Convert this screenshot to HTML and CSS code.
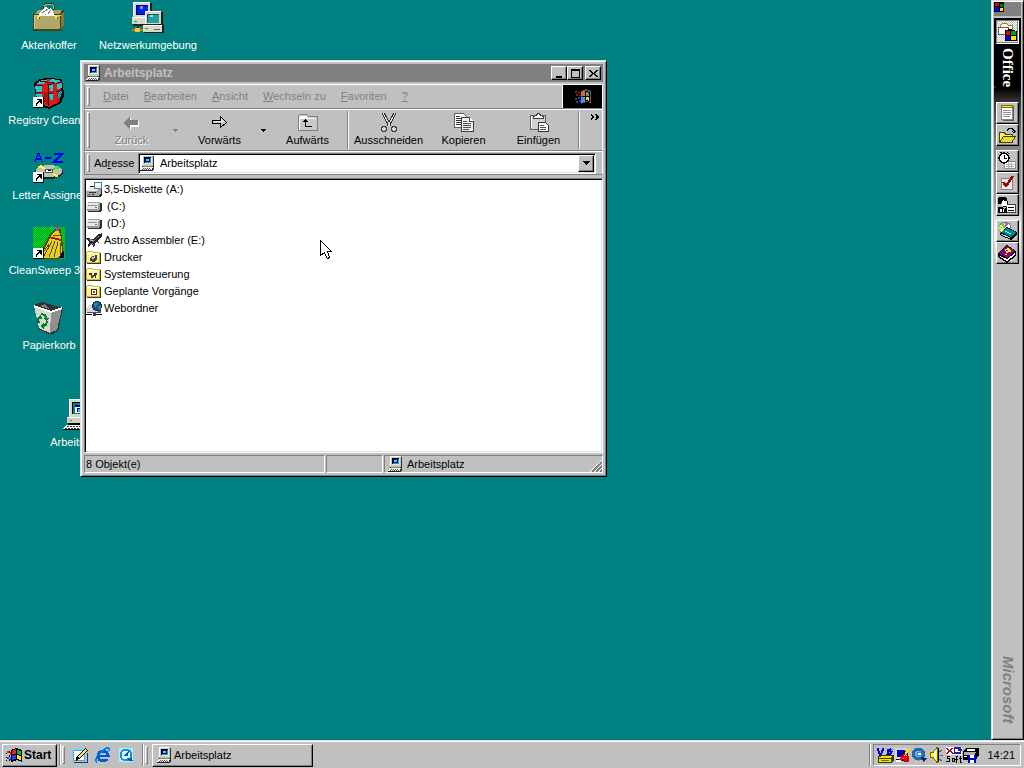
FILE: index.html
```html
<!DOCTYPE html>
<html lang="de">
<head>
<meta charset="utf-8">
<title>Arbeitsplatz</title>
<link rel="stylesheet" href="styles.css">
</head>
<body>
<svg class="sprite" aria-hidden="true">
  <defs>
    <pattern id="dither" width="2" height="2" patternUnits="userSpaceOnUse"><path fill="#000" fill-opacity=".45" d="M0 0h1v1H0zM1 1h1v1H1z"/></pattern>
    <pattern id="greens" width="2" height="2" patternUnits="userSpaceOnUse"><path fill="#00a020" d="M0 0h2v2H0z"/><path fill="#00e020" d="M0 0h1v1H0zM1 1h1v1H1z"/></pattern>
  </defs>
  <symbol id="pc" viewBox="0 0 16 16">
    <path fill="#303030" d="M3 1h11v14h-1l-1 1H2v-5h1z"/><path fill="#c8c8b8" d="M2 0h11v11H2z"/><path fill="#fff" d="M2 0h10v1H3v9H2z"/><path fill="#000" d="M4 2h7v1H5v5H4z"/><path fill="#30a0a0" d="M5 3h6v5H5z"/><path fill="#0000b0" d="M5 3h5v4H5z"/><path fill="#40e0d0" d="M6 4h3v2H6z"/><path fill="#e8e8d8" d="M4 8h8v1H4zM11 2h1v7h-1z"/><path fill="#808078" d="M3 11h9v1H3z"/>
    <path fill="#f4f4e8" d="M2 12h11v1H2zM1 13h11v1H1zM0 14h12v1H0z"/><path fill="#505050" d="M3 13h1v1H3zM5 13h1v1H5zM7 13h1v1H7zM9 13h1v1H9zM2 14h1v1H2zM4 14h1v1H4zM6 14h1v1H6zM8 14h1v1H8zM10 14h1v1h-1z"/><path fill="#202020" d="M0 15h12v1H0z"/>
  </symbol>
  <symbol id="pc-large" viewBox="0 0 32 32">
    <path fill="#000" d="M7 1h20v19H7z"/><path fill="#d8d8c8" d="M6 0h20v18H6z"/><path fill="#fff" d="M6 0h19v1H7v16H6z"/><path fill="#000" d="M9 3h15v12H9z"/><path fill="#008080" d="M10 4h14v11H10z"/><path fill="#fff" d="M12 6h11v8H12z"/><path fill="#0000a0" d="M12 6h11v2H12zM14 9h9v4h-9z"/><path fill="#20d0d0" d="M15 10h8v3h-8z"/>
    <path fill="#000" d="M5 18h22v8H5z"/><path fill="#d0d0c0" d="M4 18h22v6H4z"/><path fill="#fff" d="M4 18h21v1H4z"/><path fill="#00b020" d="M7 21h2v1H7z"/><path fill="#606060" d="M17 21h7v1h-7z"/><path fill="#f0f0e0" d="M3 26h22l-2 4H0z"/><path stroke="#404040" stroke-dasharray="2 1" d="M4 27.500h19M2 29.500h20"/><path fill="#000" d="M0 30h24v1H0z"/>
  </symbol>
  <symbol id="flag" viewBox="0 0 16 14">
    <path fill="#000" d="M5 2l5-2 6 2v12l-5-2-6 2z"/><path fill="#f02020" d="M6 3l4-2v5H6z"/><path fill="#00c020" d="M11 2l4 1v4l-4-1z"/><path fill="#2040ff" d="M6 7h4v4l-4 1z"/><path fill="#ffe020" d="M11 7l4 1v4l-4-1z"/><path fill="#000" d="M3 3h1v2H3zM3 7h1v2H3zM3 11h1v2H3zM0 5h1v1H0zM0 9h1v1H0zM0 12h1v1H0z"/><path fill="#f02020" d="M1 3h2v2H1zM4 4h1v3H4z"/><path fill="#2040ff" d="M1 9h2v2H1zM4 9h1v3H4z"/>
  </symbol>
  <symbol id="flag-dark" viewBox="0 0 18 16">
    <path fill="#605858" d="M7 2l5-2 5 2v12l-5-1-5 2z"/><path fill="#000" d="M8 3l4-1 4 1v10l-4-1-4 1z"/><path fill="#e06040" d="M7 3l4-1v5H7z"/><path fill="#50a070" d="M12 3l3 1v3h-3z"/><path fill="#5090e0" d="M7 8h4v5l-4 1z"/><path fill="#f0c840" d="M12 8h3v4l-3-1z"/><path fill="#802018" d="M1 2h2v2H1zM4 3h2v2H4zM2 5h2v2H2zM5 6h2v1H5z"/><path fill="#204890" d="M1 9h2v2H1zM4 8h2v2H4zM2 12h2v2H2zM5 11h2v2H5z"/>
  </symbol>
  <symbol id="shortcut" viewBox="0 0 11 11"><path fill="#000" d="M0 0h11v11H0z"/><path fill="#fff" d="M0 0h10v10H0z"/><path fill="#000" d="M4 2h5v5H8V6H7V5H6v1H5v1H4v2H3V6h1V5h1V4h1V3H4z"/></symbol>
  <symbol id="briefcase" viewBox="0 0 32 32">
    <path fill="#303010" d="M10 5l2-4h8l2 4v3h-2V4l-1-1h-6l-1 1v4h-2z"/><path fill="#b8b070" d="M11 4l1-2h8l1 2v3h-1V4l-1-1h-6l-1 1v2h-1z"/>
    <path fill="#404018" d="M3 10l3-2h25v15l-3 6H0V12z"/><path fill="#a8a060" d="M3 10l3-2h23l-2 4H2z"/><path fill="#807838" d="M28 12l3-3v14l-3 5z"/><path fill="#b0a868" d="M1 14h26v13H1z"/><path fill="#d8d090" d="M1 13h27v1H2v13H1z"/><path fill="#fff" d="M6 12l7-8 2 3 3-1 4 8H6z"/><path stroke="#808080" d="M9 11l6-4M15 12l3-4M12 13l1-1"/><path fill="#ffe060" d="M4 14h3v3H4zM22 14h3v3h-3z"/><path fill="#504808" d="M6 15h1v2H6zM24 15h1v2h-1zM1 27h26v1H1z"/>
  </symbol>
  <symbol id="network" viewBox="0 0 32 32">
    <path fill="#202020" d="M1 1h19v23H1z"/><path fill="#d8d8c8" d="M1 0h17v15H1zM0 15h18v7H0z"/><path fill="#fff" d="M1 0h17v1H2v13H1zM0 15h18v1H0z"/><path fill="#000080" d="M4 3h12v10H4z"/><path fill="#0020e0" d="M5 4h11v8H5z"/><path fill="#60a0ff" d="M8 4h3v3H8z"/><path fill="#00c000" d="M2 19h3v1H2z"/><path fill="#303030" d="M5 22h2v8H5z"/><path fill="#c08010" d="M0 27h13v2H0z"/><path fill="#ffc040" d="M3 26h5v4H3z"/>
    <path fill="#202020" d="M14 10h17v12h1v9H12v-9h2z"/><path fill="#d8d8c8" d="M13 9h16v13H13zM11 23h19v7H11z"/><path fill="#fff" d="M13 9h16v1H14v12h-1zM11 23h19v1H11z"/><path fill="#205050" d="M15 12h12v9H15z"/><path fill="#20a0a0" d="M16 13h11v8H16z"/><path fill="#80f0e0" d="M18 13h3v2h-3z"/><path fill="#00c000" d="M13 26h3v1h-3z"/><path fill="#606060" d="M22 27h6v1h-6z"/>
  </symbol>
  <symbol id="registry" viewBox="0 0 32 32">
    <path fill="#000" d="M1 6l6-4 8-1 13 1 2 5 1 12-3 7-12 6-9-3-4-8z"/><path fill="#e01818" d="M3 7l6-4 8-1 10 1 2 3-2 19-11 5-8-3-5-11z"/><path fill="#20c8d0" d="M4 6l5-3h5l-4 4H3zM18 2l7 1 3 2-7 1-5-1zM2 9h7v6H3zM16 8l6-1v6l-5 1zM24 7l5-1v5l-5 1zM16 17l7-1v6l-6 1zM25 15l4-1-1 6-3 2zM3 17h6v6H5z"/><path stroke="#600000" fill="none" d="M2 8h12l15-3M15 8l1 21M3 15l13 2 13-4M7 4l14 2"/><path fill="#e01818" d="M10 8h5v20l-4-2zM20 7l3-1v19l-3 2z"/><path fill="url(#dither)" d="M11 15h5v13l-5-4zM24 14h5l-2 11-3 2z"/><use href="#shortcut" x="0" y="20" width="11" height="11"/>
  </symbol>
  <symbol id="letters" viewBox="0 0 32 32">
    <path fill="none" stroke="#0000f0" stroke-width="1.500" d="M2 10l3-8h1l3 8M3 7h5M12 6h6M21 2h8l-8 8h9"/><ellipse cx="16" cy="20" rx="14" ry="7" fill="#202020"/><ellipse cx="16" cy="19" rx="13" ry="6" fill="#c0c0b8"/><path fill="#ffff20" d="M16 19L4 15l4-2zM16 19l10 5-3 1z"/><path fill="#20f020" d="M16 19l9-5 3 2zM16 19l-7 5-3-1z"/><ellipse cx="16" cy="19" rx="4" ry="2" fill="#fff" stroke="#505050"/><path fill="#000" d="M15 18h3v1h-3z"/><use href="#shortcut" x="0" y="20" width="11" height="11"/>
  </symbol>
  <symbol id="sweep" viewBox="0 0 32 32">
    <path fill="url(#greens)" d="M0 0h32v32H0z"/><path fill="#604000" d="M23 1h4l2 9 2 18-6 4H5l4-9 7-14z"/><path fill="#e0d020" d="M22 4h4l2 6 1 18-5 3H7l5-10 6-12z"/><path fill="#c040a0" d="M23 0h3v4h-3z"/><path stroke="#a02020" stroke-width="2" d="M16 10l12 3"/><path stroke="#704010" d="M20 8l7 1M19 14l-8 15M22 14l-6 16M25 15l-4 15M27 16v13M16 17l-7 10"/><path fill="#000040" d="M29 25h2v6h-4z"/><use href="#shortcut" x="0" y="21" width="11" height="11"/>
  </symbol>
  <symbol id="bin" viewBox="0 0 32 32">
    <path fill="#303030" d="M1 3l8-3 21 6-5 23-7 4-12-6z"/><path fill="#d8d8d0" d="M1 4l17 6-1 21-11-5z"/><path fill="#909090" d="M18 10l11-4-5 22-7 3z"/><path fill="#303030" d="M3 4l6-3 18 5-9 3z"/><path fill="#888" d="M7 4l5-2 4 5z"/><path fill="#fff" d="M1 3l17 6 11-4v2l-11 4L1 5z"/><path fill="none" stroke="#008020" stroke-width="2" d="M8 12l4 1 1 3M14 19l-1 4-3 1M6 21l-1-4 2-2"/><path fill="#008020" d="M11 16h5l-3 3zM11 21v6l-4-3zM4 16l4-3 1 4z"/>
  </symbol>
  <symbol id="min" viewBox="0 0 9 9"><path d="M1 7h6v2H1z"/></symbol>
  <symbol id="max" viewBox="0 0 9 9"><path fill-rule="evenodd" d="M0 0h9v9H0zM1 2v6h7V2z"/></symbol>
  <symbol id="close" viewBox="0 0 9 9"><path d="M0 1h2v1h1v1h1v1h1V3h1V2h1V1h2v1H8v1H7v1H6v1h1v1h1v1h1v1H7V7H6V6H5V5H4v1H3v1H2v1H0V7h1V6h1V5h1V4H2V3H1V2H0z"/></symbol>
  <symbol id="down" viewBox="0 0 7 4"><path d="M0 0h7v1H6v1H5v1H4v1H3V3H2V2H1V1H0z"/></symbol>
  <symbol id="down-small" viewBox="0 0 5 3"><path d="M0 0h5v1H4v1H3v1H2V2H1V1H0z"/></symbol>
  <symbol id="back" viewBox="0 0 20 20"><path fill="#fff" d="M2 11l7-6v3h8v6H9v3z"/><path fill="#808080" d="M1 10l7-6v3h8v5H8v4z"/></symbol>
  <symbol id="forward" viewBox="0 0 20 20"><path fill="#c8c8c8" stroke="#000" d="M2.500 7.500h8v-4l6 6-6 5v-4h-8z"/><path fill="#e8e8e8" d="M3 8h8V6l3 3H3z"/></symbol>
  <symbol id="up" viewBox="0 0 20 20"><path fill="#000" d="M19 4h1v14H1v-1h18z"/><path fill="#c8c8c8" stroke="#808080" d="M.5 17V3.500l2-2h6l2 2h9V17z"/><path fill="#fff" d="M2 3h7l1 2h8v1H2zM1 4h1v13H1z"/><path fill="#000" d="M7 6h1v1h1v1h1v1H8v4h6v1H7V9H5V8h1V7h1z"/></symbol>
  <symbol id="cut" viewBox="0 0 20 20"><path fill="none" stroke="#303030" stroke-width="3" d="M4 0l7 13M16 0L9 13"/><path fill="none" stroke="#e0e0e0" d="M4 0l7 13M16 0L9 13"/><circle cx="5" cy="16" r="2.500" fill="#d8d8d8" stroke="#404040" stroke-width="1.500"/><circle cx="15" cy="16" r="2.500" fill="#d8d8d8" stroke="#404040" stroke-width="1.500"/></symbol>
  <symbol id="copy" viewBox="0 0 20 20"><path fill="#fff" stroke="#606060" d="M.5.500h9l3 3v11H.5z"/><path stroke="#303030" d="M2 3.500h4M2 5.500h5M2 7.500h5M2 9.500h5M2 11.500h5"/><path fill="#eee" stroke="#404040" d="M7.500 4.500h8l4 4v10h-12z"/><path fill="#fff" stroke="#404040" d="M15.500 4.500v4h4"/><path stroke="#505050" d="M9 8.500h4M9 10.500h8M9 12.500h8M9 14.500h8M9 16.500h6"/></symbol>
  <symbol id="paste" viewBox="0 0 20 20"><path fill="#d0d0d0" stroke="#606060" d="M1.500 2.500h15v14h-15z"/><path fill="#fff" stroke="#404040" d="M4.500 5.500v-2l3-1 1-2h2l1 2 3 1v2z"/><path fill="#fff" d="M2 3h1v12H2z"/><path fill="#fff" stroke="#303030" d="M9.500 9.500h7l3 3v6h-10z"/><path stroke="#505050" d="M11 12.500h4M11 14.500h6M11 16.500h6"/></symbol>
  <symbol id="floppy" viewBox="0 0 16 16"><path fill="#202020" d="M1 7l3-3h12v9l-2 2H1z"/><path fill="#a8a8a8" d="M0 8l4-3h11v6l-3 3H0z"/><path fill="#e8e8e8" d="M0 8l4-3h10l-3 4H0z"/><path fill="#d8f8ff" stroke="#508090" d="M8.500.500h7v6h-7z"/><path fill="#fff" d="M10 1h4v2h-4z"/><path fill="#303030" d="M3 10h7v1H3zM6 12h2v1H6z"/><path fill="#00b000" d="M2 12h2v1H2z"/></symbol>
  <symbol id="drive" viewBox="0 0 16 16"><path fill="#303030" d="M2 4h13l1 1v7l-2 1H2z"/><path fill="#a0a0a0" d="M0 5l2-2h12v8l-2 1H1l-1-1z"/><path fill="#e8e8e8" d="M0 5l2-1h11l-1 1v6H0z"/><path fill="#909090" d="M2 6h9v1H2zM1 10h11v1H1z"/><path fill="#00c000" d="M9 8h2v1H9z"/></symbol>
  <symbol id="ship" viewBox="0 0 16 16"><path fill="#202028" d="M16 0v3l-4 4 1 3-3-1-2 6-2-4-4 3 1-5-3-4 7 1 4-4z"/><path fill="#707080" d="M14 1l-4 6-3 2-5-3 7 1zM7 9l1 4-2-2z"/><path fill="#b0b0c0" d="M12 3h1v1h-1zM4 7h3v1H4z"/><path fill="#a02030" d="M4 10h1v2H4z"/></symbol>
  <symbol id="folder" viewBox="0 0 16 16"><path fill="#403800" d="M1 3h14v11H1z"/><path fill="#c8b840" d="M0 2l1-1h5l1 1h7v11H0z"/><path fill="#fff090" d="M1 2h5l1 1h6v9H1z"/><path fill="#fff" d="M1 3h12v1H1z"/></symbol>
  <symbol id="printers" viewBox="0 0 16 16"><use href="#folder"/><path fill="#404040" d="M4 8l3-2 4-1v4l-3 3-4-1z"/><path fill="#d0d0d0" d="M5 8l4-2v2L7 9z"/><path fill="#00a000" d="M7 9h1v1H7z"/></symbol>
  <symbol id="control" viewBox="0 0 16 16"><use href="#folder"/><path fill="#303030" d="M3 6h3v2h2V6h3v2h-1v3H9V8L6 11H5V8H3z"/><path fill="#c02020" d="M5 8h2v2H5z"/><path fill="#2020c0" d="M9 6h2v2H9z"/></symbol>
  <symbol id="tasks" viewBox="0 0 16 16"><use href="#folder"/><path fill="#303030" d="M5 5h6v6H5z"/><path fill="#fff" d="M6 6h4v4H6z"/><path fill="#e02020" d="M7 7h2v2H7z"/></symbol>
  <symbol id="web" viewBox="0 0 16 16"><path fill="#505050" d="M1 6h14v6H1zM8 12h1v2H8z"/><path fill="#d8d8d8" d="M0 7l3-3h9v7H0z"/><path fill="#000" d="M0 13h16v1H0z"/><path fill="#fff" d="M6 12h4v3H6z"/><path fill="#404040" d="M7 12h3v3H7z"/><circle cx="11" cy="5" r="5" fill="#002060"/><circle cx="11" cy="5" r="4" fill="#2040d0"/><path fill="#20a030" d="M8 2l3-1 1 2-2 3-2-1zM12 5l3-1v3l-2 2z"/></symbol>
</svg>

<div class="workspace">
  <main class="desktop">
    <div class="icon-grid">
      <a class="shortcut first-column" href="#aktenkoffer"><svg><use href="#briefcase"/></svg><span>Aktenkoffer</span></a>
      <a class="shortcut" href="#netzwerk"><svg><use href="#network"/></svg><span>Netzwerkumgebung</span></a>
      <a class="shortcut first-column" href="#registry-clean"><svg><use href="#registry"/></svg><span>Registry Clean...</span></a>
      <a class="shortcut first-column" href="#letter"><svg><use href="#letters"/></svg><span>Letter Assigner</span></a>
      <a class="shortcut first-column" href="#cleansweep"><svg><use href="#sweep"/></svg><span>CleanSweep 3.0</span></a>
      <a class="shortcut first-column" href="#papierkorb"><svg><use href="#bin"/></svg><span>Papierkorb</span></a>
    </div>
    <a class="shortcut my-computer" href="#arbeitsplatz"><svg><use href="#pc-large"/></svg><span>Arbeitsplatz</span></a>

    <section class="window" id="arbeitsplatz">
      <header class="title-bar">
        <svg class="small-icon"><use href="#pc"/></svg>
        <h1>Arbeitsplatz</h1>
        <div class="window-controls">
          <button aria-label="Minimieren"><svg><use href="#min"/></svg></button><button aria-label="Maximieren"><svg><use href="#max"/></svg></button><button class="close" aria-label="Schließen"><svg><use href="#close"/></svg></button>
        </div>
      </header>
      <div class="band menu-band">
        <i class="grip"></i>
        <nav class="menu">
          <button><u>D</u>atei</button><button><u>B</u>earbeiten</button><button><u>A</u>nsicht</button><button><u>W</u>echseln zu</button><button><u>F</u>avoriten</button><button><u>?</u></button>
        </nav>
        <div class="throbber"><svg><use href="#flag-dark"/></svg></div>
      </div>
      <div class="band toolbar">
        <i class="grip"></i>
        <button class="tool disabled"><svg><use href="#back"/></svg>Zurück</button>
        <button class="more disabled" aria-label="Verlauf zurück"><svg><use href="#down-small"/></svg></button>
        <button class="tool"><svg><use href="#forward"/></svg>Vorwärts</button>
        <button class="more" aria-label="Verlauf vorwärts"><svg><use href="#down-small"/></svg></button>
        <button class="tool"><svg><use href="#up"/></svg>Aufwärts</button>
        <i class="rule"></i>
        <button class="tool"><svg><use href="#cut"/></svg>Ausschneiden</button>
        <button class="tool"><svg><use href="#copy"/></svg>Kopieren</button>
        <button class="tool"><svg><use href="#paste"/></svg>Einfügen</button>
        <i class="rule"></i>
        <button class="overflow" aria-label="Weitere Schaltflächen"><svg viewBox="0 0 8 5"><path fill="none" stroke="#000" stroke-width="1.500" d="M1 0l2 2.500L1 5M5 0l2 2.500L5 5"/></svg></button>
      </div>
      <div class="band address-band">
        <i class="grip"></i>
        <label for="address">Ad<u>r</u>esse</label>
        <div class="combo">
          <svg class="small-icon"><use href="#pc"/></svg>
          <input id="address" type="text" value="Arbeitsplatz">
          <button aria-label="Adressliste"><svg><use href="#down"/></svg></button>
        </div>
      </div>
      <ul class="files">
        <li><svg class="small-icon"><use href="#floppy"/></svg>3,5-Diskette (A:)</li>
        <li><svg class="small-icon"><use href="#drive"/></svg>&nbsp;(C:)</li>
        <li><svg class="small-icon"><use href="#drive"/></svg>&nbsp;(D:)</li>
        <li><svg class="small-icon"><use href="#ship"/></svg>Astro Assembler (E:)</li>
        <li><svg class="small-icon"><use href="#printers"/></svg>Drucker</li>
        <li><svg class="small-icon"><use href="#control"/></svg>Systemsteuerung</li>
        <li><svg class="small-icon"><use href="#tasks"/></svg>Geplante Vorgänge</li>
        <li><svg class="small-icon"><use href="#web"/></svg>Webordner</li>
      </ul>
      <footer class="status">
        <div>8 Objekt(e)</div><div></div>
        <div class="zone"><svg class="small-icon"><use href="#pc"/></svg>Arbeitsplatz
          <svg class="resize" viewBox="0 0 12 12"><path stroke="#fff" d="M0 12L12 0M4 12l8-8M8 12l4-4"/><path stroke="#808080" stroke-width="1.500" d="M2 12L12 2M6 12l6-6M10 12l2-2"/></svg></div>
      </footer>
    </section>
    <svg class="pointer" viewBox="0 0 12 19"><path fill="#fff" stroke="#000" d="M.5.500v15l4-3 2 5 1 1 2-1-2-6h4z"/></svg>
  </main>

  <aside class="office-bar">
    <div class="office-title"><svg viewBox="0 0 10 10"><path d="M0 0h10v10H0z"/><path fill="#f00000" d="M1 1h4v3H1z"/><path fill="#008000" d="M6 2h3v3H6z"/><path fill="#0000ff" d="M1 5h4v4H1z"/><path fill="#ffe000" d="M6 6h3v3H6z"/></svg></div>
    <div class="office-body">
      <button class="pressed" aria-label="Office"><svg viewBox="0 0 20 20"><path fill="#fff8c0" stroke="#808060" d="M3.500 12V3.500l2-2h4l2 2h4v8"/><path fill="#fff" stroke="#606060" d="M1.500 5.500h10v7h-10z"/><path fill="#000" d="M8 8l5-1 7 2v10H8z"/><path fill="#f00000" d="M9 9h4v4H9z"/><path fill="#00a000" d="M14 9h5v4h-5z"/><path fill="#0000ff" d="M9 14h4v4H9z"/><path fill="#ffe000" d="M14 14h5v4h-5z"/></svg></button>
      <span class="office-name">Office</span>
      <div class="office-group">
        <button aria-label="Neues Dokument"><svg viewBox="0 0 20 20"><path fill="#606060" d="M6 3h11v15H6z"/><path fill="#fff" stroke="#808080" d="M4.500 2.500h11v14h-11z"/><path fill="#ffe840" stroke="#807000" d="M4.500 2.500h11v2h-11z"/><path stroke="#909090" d="M6 7.500h8M6 9.500h8M6 11.500h8M6 13.500h7"/></svg></button>
        <button aria-label="Dokument öffnen"><svg viewBox="0 0 20 20"><path fill="#fff060" stroke="#404000" d="M2.500 17V7.500h5l1 2h7V17z"/><path fill="#e8d830" stroke="#404000" d="M2.500 17.500l4-6h12l-4 6z"/><path fill="none" stroke="#000" d="M10 5.500l2-2h3l2 2v2M15 6l2 2 2-2"/></svg></button>
      </div>
      <div class="office-group">
        <button aria-label="Neuer Termin"><svg viewBox="0 0 20 20"><path fill="#fff" stroke="#909090" d="M7.500 10.500h11v7h-11z"/><path stroke="#b0b0b0" d="M9 13.500h8M9 15.500h8M11.500 11v6M14.500 11v6"/><circle cx="7" cy="7" r="5" fill="#fff" stroke="#000" stroke-width="1.500"/><path fill="none" stroke="#000" d="M7 4v3l3 1M3 2l2-1M10 1l2 2"/></svg></button>
        <button aria-label="Neue Aufgabe"><svg viewBox="0 0 20 20"><path fill="#eee" stroke="#808080" d="M4.500 5.500h11v11h-11z"/><path fill="none" stroke="#a00000" stroke-width="2.500" d="M6 9l3 4 7-10"/></svg></button>
        <button aria-label="Neuer Kontakt"><svg viewBox="0 0 20 20"><path fill="#fff" stroke="#404040" d="M9.500 9.500h9v8h-9z"/><path stroke="#000" d="M11 12.500h6M11 15.500h6"/><path fill="#fff" d="M4 4h6v6l-2 2-3-1z"/><path fill="#000" d="M2 2h6l2 2v2H8L6 5 4 9H1V4zM10 6h1v3h-1zM6 11h3v1H6zM1 12h4l2 2 3-2v6H1z"/><path fill="#fff" d="M3 14h2v3H3zM6 14h1v3H6z"/></svg></button>
      </div>
      <div class="office-group">
        <button aria-label="Internet"><svg viewBox="0 0 20 20"><circle cx="8" cy="7" r="6" fill="#fff" stroke="#808080"/><path fill="#40e040" d="M8 7L3 3l4-2z"/><path fill="#e040e0" d="M8 7V1l4 1z"/><path fill="#e0e020" d="M8 7L2 5v4z"/><path fill="#000" d="M3 12l7-6 10 5v2l-6 6-11-5z"/><path fill="#008888" d="M4 11l6-4 9 4-5 5z"/><path stroke="#80ffff" d="M8 10l6 3M4 13l9 4"/></svg></button>
        <button aria-label="Nachschlagewerk"><svg viewBox="0 0 20 20"><path fill="#000" d="M1 10l9-8 9 6v5l-9 7-9-6z"/><path fill="#900090" d="M2 10l8-7 8 5-8 7z"/><path fill="#fff" d="M10 16l8-6v2l-8 6-7-4v-1z"/><path fill="none" stroke="#ffff00" stroke-width="1.500" d="M8 7l3-1 2 2-3 1v1M9 11v1"/></svg></button>
      </div>
      <span class="microsoft">Microsoft</span>
    </div>
  </aside>
</div>

<footer class="taskbar">
  <button class="start"><svg><use href="#flag"/></svg>Start</button>
  <i class="divider"></i><i class="grip"></i>
  <div class="quick-launch">
    <button aria-label="Desktop anzeigen"><svg viewBox="0 0 16 16"><path fill="#80d8f0" d="M0 1h13v12H0z"/><path fill="#fff" stroke="#60a0c0" d="M1.500 3.500h11v10h-11z"/><path fill="#000" d="M4 11l9-10 3 2-9 9-3 2z"/><path fill="#ffe060" d="M6 10l7-8 2 1-8 8z"/><path fill="#004080" d="M2 15h14v1H2zM15 6h1v9h-1z"/></svg></button>
    <button aria-label="Internet Explorer"><svg viewBox="0 0 16 16"><circle cx="8" cy="9" r="5" fill="none" stroke="#0058d0" stroke-width="3"/><path fill="#c0c0c0" d="M9 10h7v2h-5z"/><path fill="#0058d0" d="M4 8h11v2H4z"/><path fill="none" stroke="#0080e8" stroke-width="1.500" d="M2 15c-4-2 3-10 8-13 3-2 6-1 4 2"/></svg></button>
    <button aria-label="QuickTime"><svg viewBox="0 0 16 16"><path fill="#b8e8ff" d="M1 1h14v14H1z"/><circle cx="8" cy="8" r="5.500" fill="#d8f8ff" stroke="#2090d0" stroke-width="2"/><path fill="#0060a0" d="M5 9l6-5-1 5zM9 11h5l1 3h-4z"/></svg></button>
  </div>
  <i class="divider"></i><i class="grip"></i>
  <button class="task"><svg class="small-icon"><use href="#pc"/></svg>Arbeitsplatz</button>
  <i class="divider tray-divider"></i>
  <div class="tray">
    <svg viewBox="0 0 16 16"><path fill="none" stroke="#0000e0" stroke-width="2" d="M0 1l3 8 3-8M14 2l-3 1 3 2-2 3-3-1M10 4v6"/><path fill="#304000" d="M0 10l3-2h13v6l-2 2H0z"/><path fill="#ffe000" d="M1 11l3-2h11l-2 2zM1 12h12v3H1z"/><path fill="#806000" d="M3 13h8v1H3z"/></svg>
    <svg viewBox="0 0 16 16"><path fill="#000" d="M1 2h12v12H1z"/><path fill="#d8d8d8" d="M0 1h12v11H0z"/><path fill="#0000c0" d="M2 3h8v7H2z"/><path fill="#e00000" d="M4 13l9-11 2 2-9 11zM9 9h5v6H9z"/><path fill="#ffe000" d="M12 3l3-2v3l-6 6z"/><path fill="#fff" d="M1 13h5v2H1z"/></svg>
    <svg viewBox="0 0 16 16"><circle cx="7" cy="7" r="5" fill="#70b0e8" stroke="#2868a8" stroke-width="3"/><circle cx="8" cy="7" r="2" fill="#fff" stroke="#4080d0"/><path fill="#003060" d="M9 10l7 1-4 4z"/></svg>
    <svg viewBox="0 0 16 16"><path fill="#ffff00" stroke="#806000" d="M1.500 5.500h3l4-5v15l-4-5h-3z"/><path fill="#fff" d="M5 5l2-2v9l-2-2z"/><path fill="#000" d="M9 1h1v14H9z"/><path stroke="#606060" d="M11 8.500h3M11 5l2-2M11 12l2 2"/></svg>
    <svg viewBox="0 0 16 16"><path fill="#fff" d="M0 0h16v8H0z"/><path fill="none" stroke="#a01020" stroke-width="1.500" d="M1 1l7 6M7 1L1 7"/><path fill="none" stroke="#2020a0" stroke-width="1.500" d="M9 1h6v5H9zM12 3h4"/><path fill="none" stroke="#000" d="M4 9.500H1.500v2h2v3H0M6.500 11.500h2v3h-2zM12 9.500h-1.500V16M9 12.500h3M14.500 9v6h2M13 11.500h3"/></svg>
    <svg viewBox="0 0 16 16"><path fill="#000" d="M0 5l4-4h12v8l-3 4H0z"/><path fill="#b0b0b0" d="M2 5h12l-2 3H1z"/><path fill="#fff" d="M5 2h8l-1 2H4zM1 9h3v1H1z"/><path fill="#0000c0" d="M5 8h8v8H5z"/><path fill="#fff" d="M7 8h4v3H7zM7 13h4v3H7z"/></svg>
    <time>14:21</time>
  </div>
</footer>
</body>
</html>
```
FILE: styles.css
```css
* { box-sizing: border-box; }

body {
  margin: 0;
  height: 100vh;
  display: flex;
  flex-direction: column;
  overflow: hidden;
  background: #008080;
  color: #000;
  font: 11px/13px "Liberation Sans", Arial, sans-serif;
  cursor: default;
}

button, input { font: inherit; color: inherit; }
button { padding: 0; border: 0; background: none; }
svg { display: block; flex: none; shape-rendering: crispEdges; }
u { text-underline-offset: 1px; }

.sprite { position: absolute; width: 0; height: 0; }
.small-icon { width: 16px; height: 16px; }
.workspace { flex: 1; min-height: 0; display: flex; }
.desktop { position: relative; flex: 1; min-width: 0; }

/* Desktop shortcuts */
.icon-grid {
  display: grid;
  grid-template-columns: 75px 75px;
  grid-auto-rows: 75px;
  column-gap: 24px;
  padding: 2px 12px;
}
.first-column { grid-column: 1; }
.shortcut {
  display: flex;
  flex-direction: column;
  align-items: center;
  gap: 5px;
  width: 74px;
  color: #fff;
  text-decoration: none;
  white-space: nowrap;
}
.shortcut svg { width: 32px; height: 32px; }
.my-computer { position: absolute; left: 42px; top: 399px; }

/* Explorer window */
.window, .office-bar {
  background: #c0c0c0;
  border: 1px solid;
  border-color: #dfdfdf #000 #000 #dfdfdf;
  box-shadow: inset 1px 1px #fff, inset -1px -1px #808080;
}
.window {
  position: absolute;
  left: 80px;
  top: 60px;
  width: 527px;
  height: 417px;
  display: flex;
  flex-direction: column;
  padding: 3px;
}

.title-bar {
  display: flex;
  align-items: center;
  gap: 2px;
  height: 18px;
  margin-bottom: 2px;
  padding: 0 2px;
  background: #808080;
  color: #c0c0c0;
}
.title-bar h1 { flex: 1; margin: 0; font-size: 12px; line-height: 16px; }
.window-controls { display: flex; color: #000; }
.window-controls button { width: 16px; height: 14px; }
.window-controls svg { width: 9px; height: 9px; margin: 0 auto; }
.window-controls .close { margin-left: 2px; }

.window-controls button, .combo button, .start, .task {
  background: #c0c0c0;
  border: 1px solid;
  border-color: #fff #000 #000 #fff;
  box-shadow: inset -1px -1px #808080;
}

.band {
  display: flex;
  align-items: center;
  border: 1px solid;
  border-color: #fff #fff #808080 #808080;
}
.grip {
  width: 3px;
  align-self: stretch;
  margin: 2px 4px 2px 2px;
  border: 1px solid;
  border-color: #fff #808080 #808080 #fff;
}
.menu-band { height: 25px; }
.menu { flex: 1; display: flex; gap: 15px; padding-left: 9px; color: #808080; }
.throbber {
  width: 39px;
  align-self: stretch;
  display: flex;
  background: #000;
  box-shadow: -1px 0 #fff;
}
.throbber svg { width: 18px; height: 16px; margin: auto; }

.toolbar { height: 42px; }
.tool {
  width: 75px;
  display: flex;
  flex-direction: column;
  align-items: center;
  gap: 1px;
}
.tool svg { width: 20px; height: 20px; }
.more { width: 13px; }
.more svg { width: 5px; height: 3px; margin: 0 auto; }
.disabled { color: #808080; fill: #808080; text-shadow: 1px 1px #fff; }
.rule {
  width: 2px;
  align-self: stretch;
  margin: 1px 2px;
  border: solid;
  border-width: 0 1px;
  border-color: #808080 #fff #808080 #808080;
}
.overflow { flex: 1; align-self: flex-start; padding: 4px 0 0 5px; }
.overflow svg { width: 9px; height: 6px; margin: 0 auto; }

.address-band { height: 24px; margin-bottom: 3px; }
.address-band label { width: 44px; }
.combo {
  flex: 1;
  display: flex;
  align-items: center;
  height: 21px;
  margin-right: 6px;
  padding-left: 1px;
  background: #fff;
  border: 1px solid;
  border-color: #808080 #fff #fff #808080;
  box-shadow: inset 1px 1px #000, inset -1px -1px #dfdfdf;
}
.combo input { flex: 1; min-width: 0; padding: 0 0 0 4px; border: 0; background: none; outline: 0; }
.combo button { width: 16px; height: 17px; margin-right: 1px; }
.combo button svg { width: 7px; height: 4px; margin: auto; }

.files {
  flex: 1;
  margin: 0 0 2px;
  padding: 2px 1px 0;
  list-style: none;
  background: #fff;
  border: 1px solid;
  border-color: #808080 #fff #fff #808080;
  box-shadow: inset 1px 1px #000, inset -1px -1px #dfdfdf;
}
.files li { display: flex; align-items: center; gap: 2px; height: 17px; }

.status { display: grid; grid-template-columns: 241px 57px 1fr; gap: 1px; height: 18px; }
.status div {
  display: flex;
  align-items: center;
  padding-left: 1px;
  border: 1px solid;
  border-color: #808080 #fff #fff #808080;
}
.status .zone { gap: 3px; padding-left: 3px; }
.resize { width: 12px; height: 12px; margin-left: auto; align-self: flex-end; }

.pointer { position: absolute; left: 320px; top: 240px; width: 12px; height: 19px; }

/* Office shortcut bar */
.office-bar {
  width: 33px;
  display: flex;
  flex-direction: column;
  padding: 1px 2px 2px;
}
.office-title { height: 14px; margin-bottom: 2px; background: #808080; }
.office-title svg { width: 10px; height: 10px; }
.office-body {
  flex: 1;
  display: flex;
  flex-direction: column;
  align-items: center;
  gap: 4px;
  padding: 2px 0 14px;
  background:
    repeating-conic-gradient(#c0c0c066 0 25%, transparent 0 50%) 0 68px / 2px 2px no-repeat,
    linear-gradient(#000 70px, #303030 82px, #808080 125px, #a0a0a0 185px, #f0f0f0 205px, #f0f0f0 220px, #c0c0c0 245px);
}
.office-body button {
  display: block;
  width: 23px;
  height: 22px;
  background: #c0c0c0;
  border: 1px solid;
  border-color: #fff #000 #000 #fff;
  box-shadow: inset -1px -1px #808080;
}
.office-body svg { width: 20px; height: 20px; }
.office-body .pressed {
  height: 24px;
  background: repeating-conic-gradient(#fff 0 25%, #c0c0c0 0 50%) 0 0 / 2px 2px;
  border-color: #808080 #fff #fff #808080;
}
.office-name, .microsoft { writing-mode: vertical-rl; }
.office-name {
  height: 50px;
  color: #fff;
  font: bold 15px/18px "Liberation Serif", "Times New Roman", serif;
}
.microsoft {
  margin-top: auto;
  color: #808080;
  font: italic bold 15px/18px "Liberation Sans", Arial, sans-serif;
}

/* Taskbar */
.taskbar {
  display: flex;
  align-items: center;
  height: 28px;
  padding: 1px 3px 0 2px;
  background: #c0c0c0;
  border-top: 1px solid #dfdfdf;
  box-shadow: inset 0 1px #fff;
}
.start {
  display: flex;
  align-items: center;
  gap: 2px;
  width: 55px;
  height: 23px;
  padding-left: 3px;
  font-weight: bold;
  font-size: 12px;
}
.start svg { width: 16px; height: 14px; }
.divider {
  width: 2px;
  height: 22px;
  margin-left: 2px;
  border-left: 1px solid #808080;
  border-right: 1px solid #fff;
}
.taskbar .grip { height: 18px; align-self: center; margin: 0 4px 0 1px; }
.quick-launch { display: flex; gap: 7px; margin: 0 6px 0 3px; }
.quick-launch svg { width: 16px; height: 16px; }
.task {
  display: flex;
  align-items: center;
  gap: 1px;
  width: 161px;
  height: 23px;
  padding-left: 4px;
}
.tray-divider { margin-left: auto; margin-right: 2px; }
.tray {
  display: flex;
  align-items: center;
  height: 22px;
  padding: 0 5px 0 3px;
  border: 1px solid;
  border-color: #808080 #fff #fff #808080;
}
.tray svg { width: 17px; height: 16px; }
.tray time { margin-left: 8px; }
```
